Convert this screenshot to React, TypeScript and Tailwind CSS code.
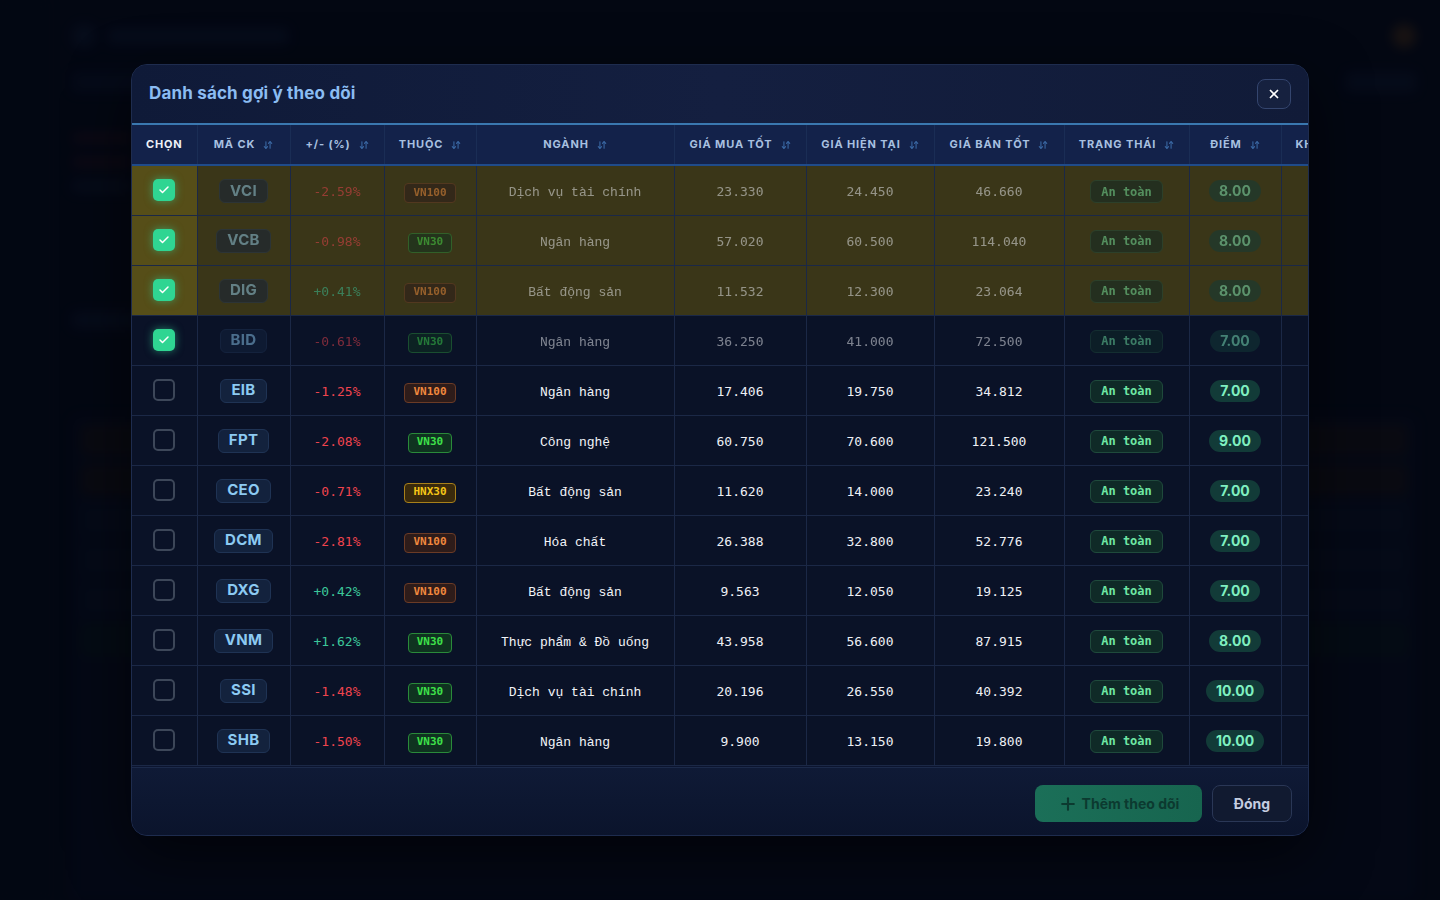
import { ArrowDownUp, Check, Plus, X } from "lucide-react";

type Row = {
  code: string;
  pct: string;
  group: "VN100" | "VN30" | "HNX30";
  sector: string;
  buy: string;
  now: string;
  sell: string;
  score: string;
  checked: boolean;
  followed: boolean;
};

const rows: Row[] = [
  { code: "VCI", pct: "-2.59%", group: "VN100", sector: "Dịch vụ tài chính", buy: "23.330", now: "24.450", sell: "46.660", score: "8.00", checked: true, followed: true },
  { code: "VCB", pct: "-0.98%", group: "VN30", sector: "Ngân hàng", buy: "57.020", now: "60.500", sell: "114.040", score: "8.00", checked: true, followed: true },
  { code: "DIG", pct: "+0.41%", group: "VN100", sector: "Bất động sản", buy: "11.532", now: "12.300", sell: "23.064", score: "8.00", checked: true, followed: true },
  { code: "BID", pct: "-0.61%", group: "VN30", sector: "Ngân hàng", buy: "36.250", now: "41.000", sell: "72.500", score: "7.00", checked: true, followed: false },
  { code: "EIB", pct: "-1.25%", group: "VN100", sector: "Ngân hàng", buy: "17.406", now: "19.750", sell: "34.812", score: "7.00", checked: false, followed: false },
  { code: "FPT", pct: "-2.08%", group: "VN30", sector: "Công nghệ", buy: "60.750", now: "70.600", sell: "121.500", score: "9.00", checked: false, followed: false },
  { code: "CEO", pct: "-0.71%", group: "HNX30", sector: "Bất động sản", buy: "11.620", now: "14.000", sell: "23.240", score: "7.00", checked: false, followed: false },
  { code: "DCM", pct: "-2.81%", group: "VN100", sector: "Hóa chất", buy: "26.388", now: "32.800", sell: "52.776", score: "7.00", checked: false, followed: false },
  { code: "DXG", pct: "+0.42%", group: "VN100", sector: "Bất động sản", buy: "9.563", now: "12.050", sell: "19.125", score: "7.00", checked: false, followed: false },
  { code: "VNM", pct: "+1.62%", group: "VN30", sector: "Thực phẩm & Đồ uống", buy: "43.958", now: "56.600", sell: "87.915", score: "8.00", checked: false, followed: false },
  { code: "SSI", pct: "-1.48%", group: "VN30", sector: "Dịch vụ tài chính", buy: "20.196", now: "26.550", sell: "40.392", score: "10.00", checked: false, followed: false },
  { code: "SHB", pct: "-1.50%", group: "VN30", sector: "Ngân hàng", buy: "9.900", now: "13.150", sell: "19.800", score: "10.00", checked: false, followed: false },
];

const columns = [
  { label: "CHỌN", w: "w-[65px]", sort: false },
  { label: "MÃ CK", w: "w-[93px]", sort: true },
  { label: "+/- (%)", w: "w-[94px]", sort: true },
  { label: "THUỘC", w: "w-[92px]", sort: true },
  { label: "NGÀNH", w: "w-[198px]", sort: true },
  { label: "GIÁ MUA TỐT", w: "w-[132px]", sort: true },
  { label: "GIÁ HIỆN TẠI", w: "w-[128px]", sort: true },
  { label: "GIÁ BÁN TỐT", w: "w-[130px]", sort: true },
  { label: "TRẠNG THÁI", w: "w-[125px]", sort: true },
  { label: "ĐIỂM", w: "w-[92px]", sort: true },
  { label: "KHUYẾN NGHỊ", w: "w-[150px]", sort: true },
];

const mono = "font-['DejaVu_Sans_Mono',monospace]";
const monoVi = "font-['Liberation_Mono','DejaVu_Sans_Mono',monospace]";

function GroupBadge({ group }: { group: Row["group"] }) {
  const styles = {
    VN100: "text-[#f0883e] bg-[#2e1c1a] border-[#6b3b26]",
    VN30: "text-[#3ee04a] bg-[#0f3320] border-[#2a8a3a]",
    HNX30: "text-[#f5c518] bg-[#3a2a0c] border-[#a8801a]",
  }[group];
  return (
    <span className={`inline-flex items-center h-[20px] px-2 rounded-[4px] border text-[11px] font-bold ${mono} ${styles}`}>
      {group}
    </span>
  );
}

function Checkbox({ checked }: { checked: boolean }) {
  if (checked) {
    return (
      <div className="w-[22px] h-[22px] rounded-[5px] bg-[#2fd592] flex items-center justify-center shadow-[0_0_8px_rgba(52,211,153,0.55)] mx-auto">
        <Check className="w-3 h-3 text-white" strokeWidth={3} />
      </div>
    );
  }
  return <div className="w-[22px] h-[22px] rounded-[5px] border-2 border-[#3d4759] mx-auto" />;
}

function Backdrop() {
  return (
    <div className="absolute inset-0 blur-[6px] opacity-40">
      <div className="flex h-full">
        <div className="w-[48px] bg-[#040916]" />
        <div className="flex-1 flex flex-col gap-6 px-6 pt-6">
          <div className="flex items-center justify-between">
            <div className="flex items-center gap-3">
              <div className="w-6 h-6 rounded-full bg-[#1a2747]" />
              <div className="w-[180px] h-4 rounded bg-[#1b2747]" />
            </div>
            <div className="w-6 h-6 rounded-full bg-[#7a4a18]" />
          </div>
          <div className="flex items-center justify-between">
            <div className="w-[200px] h-5 rounded bg-[#121d3a]" />
            <div className="w-[70px] h-5 rounded bg-[#16223f]" />
          </div>
          <div className="flex flex-col gap-3 w-[60px] pt-4">
            <div className="h-3 rounded bg-[#3a1620]" />
            <div className="h-3 rounded bg-[#3a1620]" />
            <div className="h-3 rounded bg-[#1a2440]" />
          </div>
          <div className="w-[120px] h-4 rounded bg-[#182443] mt-24" />
          <div className="flex-1 rounded-lg bg-[#0a1228] flex flex-col gap-2 p-2 mt-16">
            <div className="h-8 rounded bg-[#2a1a14]" />
            <div className="h-8 rounded bg-[#2a1a14]" />
            <div className="h-8 rounded bg-[#0f1a33]" />
            <div className="h-8 rounded bg-[#0f1a33]" />
            <div className="h-8 rounded bg-[#0f1a33]" />
            <div className="h-8 rounded bg-[#0e2220]" />
          </div>
        </div>
      </div>
    </div>
  );
}

export default function App() {
  return (
    <div className="relative w-[1440px] h-[900px] bg-[#050a18] overflow-hidden font-['Inter','Noto_Sans',sans-serif]">
      <Backdrop />
      <div className="absolute inset-0 bg-[#02050f]/55" />

      <div className="absolute inset-0 flex items-center justify-center">
        <div className="w-[1178px] h-[772px] rounded-[16px] border border-[#1e2c4e] bg-[#0c1530] shadow-[0_20px_60px_rgba(0,0,0,0.6)] flex flex-col overflow-hidden">
          {/* header */}
          <div className="h-[58px] shrink-0 flex items-center justify-between pl-[17px] pr-[17px] bg-gradient-to-r from-[#0f1a38] via-[#141f40] to-[#111b38]">
            <h2 className="text-[17px] font-bold text-[#8bbcf2] tracking-[0.01em]">Danh sách gợi ý theo dõi</h2>
            <button className="w-[34px] h-[30px] rounded-lg border border-[#34456e] bg-[#16213f] flex items-center justify-center">
              <X className="w-3.5 h-3.5 text-white" strokeWidth={3} />
            </button>
          </div>

          {/* table */}
          <div className="h-[644px] shrink-0 overflow-hidden">
            <table className="table-fixed border-collapse w-[1299px]">
              <colgroup>
                {columns.map((c) => (
                  <col key={c.label} className={c.w} />
                ))}
              </colgroup>
              <thead>
                <tr className="h-[41px] bg-[#13224a]">
                  {columns.map((c, i) => (
                    <th
                      key={c.label}
                      className={`border-t-2 border-t-[#3a78b0] border-b-2 border-b-[#1f4b8a] border-r border-r-[#1a2d55] text-[11px] font-bold tracking-[0.08em] whitespace-nowrap ${i === columns.length - 1 ? "text-left pl-[14px]" : "text-center"} ${i === 0 ? "text-[#eef2f8]" : "text-[#a8c0e0]"}`}
                    >
                      <span className="inline-flex items-center gap-2">
                        {c.label}
                        {c.sort && <ArrowDownUp className="w-2.5 h-2.5 text-[#3b6aa6]" strokeWidth={2.5} />}
                      </span>
                    </th>
                  ))}
                </tr>
              </thead>
              <tbody>
                {rows.map((r) => {
                  const cell = `border-b border-r border-[#1b2846] text-center ${r.followed ? "bg-[#3a3618]" : "bg-[#0a1227]"}`;
                  const dim = r.checked ? "opacity-50" : "";
                  const up = r.pct.startsWith("+");
                  return (
                    <tr key={r.code} className="h-[50px]">
                      <td className={`border-b border-r border-[#1b2846] ${r.followed ? "bg-[#564e18]" : "bg-[#0a1227]"}`}>
                        <Checkbox checked={r.checked} />
                      </td>
                      <td className={cell}>
                        <span className={`inline-flex items-center h-[24px] px-2.5 rounded-md border border-[#1f3354] bg-[#13223d] text-[15px] font-bold tracking-[0.02em] text-[#8ccaf2] ${dim}`}>
                          {r.code}
                        </span>
                      </td>
                      <td className={cell}>
                        <span className={`text-[13px] ${mono} ${up ? "text-[#3cc79a]" : "text-[#f0444e]"} ${dim}`}>{r.pct}</span>
                      </td>
                      <td className={cell}>
                        <span className={dim}>
                          <GroupBadge group={r.group} />
                        </span>
                      </td>
                      <td className={cell}>
                        <span className={`text-[13px] text-[#f2f4f8] whitespace-nowrap ${monoVi} ${dim}`}>{r.sector}</span>
                      </td>
                      <td className={cell}>
                        <span className={`text-[13px] text-[#eef0f5] ${mono} ${dim}`}>{r.buy}</span>
                      </td>
                      <td className={cell}>
                        <span className={`text-[13px] text-[#eef0f5] ${mono} ${dim}`}>{r.now}</span>
                      </td>
                      <td className={cell}>
                        <span className={`text-[13px] text-[#eef0f5] ${mono} ${dim}`}>{r.sell}</span>
                      </td>
                      <td className={cell}>
                        <span className={`inline-flex items-center h-[23px] px-2.5 rounded-md border border-[#1f4a3c] bg-[#0f2a27] text-[12px] font-bold text-[#6ee7a4] ${mono} ${dim}`}>
                          An toàn
                        </span>
                      </td>
                      <td className={cell}>
                        <span className={`inline-flex items-center h-[22px] px-2.5 rounded-full bg-[#123b38] text-[14px] font-bold text-[#7ff0c0] ${dim}`}>
                          {r.score}
                        </span>
                      </td>
                      <td className={cell} />
                    </tr>
                  );
                })}
              </tbody>
            </table>
          </div>

          {/* footer */}
          <div className="flex-1 flex items-center justify-end gap-[10px] pr-[16px] pt-[4px] border-t border-[#1c2a4a] bg-gradient-to-b from-[#0f1a36] to-[#0b142c]">
            <button className="h-[37px] w-[167px] rounded-lg bg-gradient-to-r from-[#1b6f58] to-[#17654f] flex items-center justify-center gap-1 text-[14px] font-bold text-[#0c3a30]">
              <Plus className="w-5 h-5" strokeWidth={2.5} />
              Thêm theo dõi
            </button>
            <button className="h-[37px] w-[80px] rounded-lg border border-[#2a3756] bg-[#111a30] text-[14px] font-bold text-[#c5cde0]">
              Đóng
            </button>
          </div>
        </div>
      </div>
    </div>
  );
}
